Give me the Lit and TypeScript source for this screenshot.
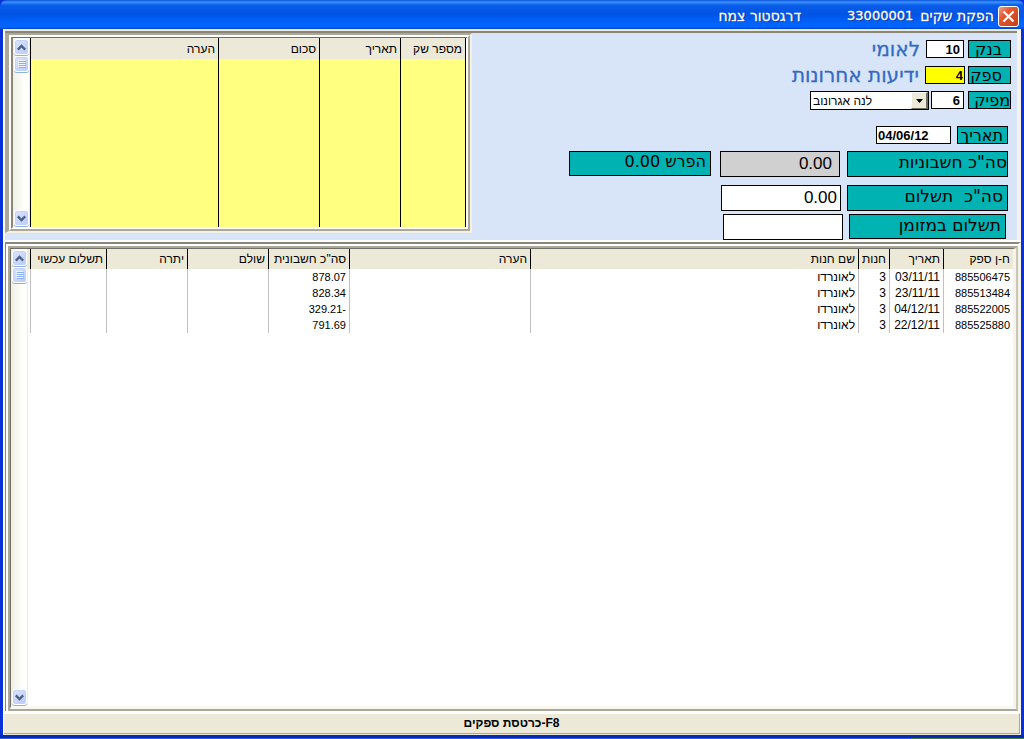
import { LitElement, html, svg, css } from "lit";
import { customElement, property } from "lit/decorators.js";

interface Invoice {
  id: string;
  date: string;
  shop: string;
  name: string;
  total: string;
}

const INVOICES: Invoice[] = [
  { id: "885506475", date: "03/11/11", shop: "3", name: "לאונרדו", total: "878.07" },
  { id: "885513484", date: "23/11/11", shop: "3", name: "לאונרדו", total: "828.34" },
  { id: "885522005", date: "04/12/11", shop: "3", name: "לאונרדו", total: "329.21-" },
  { id: "885525880", date: "22/12/11", shop: "3", name: "לאונרדו", total: "791.69" },
];

/** Vertical Luna-style scroll bar. */
@customElement("scroll-bar")
export class ScrollBar extends LitElement {
  static styles = css`
    :host {
      display: flex;
      flex-direction: column;
      flex: none;
      box-sizing: border-box;
      width: 17px;
      padding: 1px 1px 1px 1px;
      background: linear-gradient(90deg, #f0efe6, #fefefb 70%);
      border-right: 1px solid #eeede5;
    }
    button,
    .thumb {
      box-sizing: border-box;
      width: 15px;
      height: 16px;
      flex: none;
      padding: 0;
      margin: 0;
      border: 1px solid #fff;
      border-radius: 3px;
      background: linear-gradient(135deg, #dbe5fe, #b9cbf8);
      box-shadow: inset 0 0 0 1px #c3d2f8, 0 1px 0 #8faee8;
      display: flex;
      align-items: center;
      justify-content: center;
    }
    .thumb {
      margin-top: 1px;
    }
    .track {
      flex: 1;
    }
  `;

  render() {
    const arrow = (d: string) =>
      svg`<path d=${d} fill="none" stroke="#4d6185" stroke-width="2.4"/>`;
    return html`
      <button aria-label="למעלה" type="button">
        <svg width="9" height="7" viewBox="0 0 9 7">${arrow("M0.8 5.6L4.5 1.9L8.2 5.6")}</svg>
      </button>
      <div class="thumb">
        <svg width="8" height="8" viewBox="0 0 8 8" shape-rendering="crispEdges">
          <path d="M0 0.5H7M0 2.5H7M0 4.5H7M0 6.5H7" stroke="#eef4fe" />
          <path d="M1 1.5H8M1 3.5H8M1 5.5H8M1 7.5H8" stroke="#8cb0f8" />
        </svg>
      </div>
      <div class="track"></div>
      <button aria-label="למטה" type="button">
        <svg width="9" height="7" viewBox="0 0 9 7">${arrow("M0.8 1.4L4.5 5.1L8.2 1.4")}</svg>
      </button>
    `;
  }
}

@customElement("app-root")
export class AppRoot extends LitElement {
  @property({ attribute: false }) invoices: Invoice[] = INVOICES;

  static styles = css`
    :host {
      display: block;
      font-family: "Liberation Sans", Arial, sans-serif;
      font-size: 12px;
      line-height: 16px;
      color: #000;
    }
    * {
      box-sizing: border-box;
    }
    .window {
      display: flex;
      flex-direction: column;
      min-height: 100vh;
      background: #0831d9;
    }
    .title {
      flex: none;
      display: flex;
      direction: rtl;
      align-items: center;
      height: 29px;
      padding: 3px 5px 0;
      border-radius: 7px 7px 0 0;
      background: linear-gradient(#0a4fd8, #3a93ff 7%, #0a5ce8 18%, #0054e3 50%, #0061fb 75%, #0066ff 92%, #0043c8);
      color: #fff;
      font-family: "DejaVu Sans", sans-serif;
      font-size: 14px;
      text-shadow: 1px 1px 0 #0a2f93;
      -webkit-text-stroke: 0.3px #fff;
      white-space: pre;
    }
    .close {
      width: 21px;
      height: 21px;
      flex: none;
      padding: 0;
      border: 1px solid #fff;
      border-radius: 3px;
      background: linear-gradient(135deg, #f0a088, #e05a35 35%, #c83c14);
      display: flex;
      align-items: center;
      justify-content: center;
    }
    .title h1 {
      margin: 0 4px 0 0;
      font: inherit;
      display: flex;
    }
    .num {
      margin: 0 7px 0 46px;
      font-size: 13px;
    }
    .client {
      flex: 1;
      display: flex;
      flex-direction: column;
      margin: 0 3px;
      padding: 0 0 0 1px;
      background: #fff;
      border-bottom: 1px solid #ece9d8;
    }
    .top {
      flex: none;
      display: flex;
      margin-left: 1px;
      border-top: 2px solid #ece9d8;
      background: #d8e4f8;
      border-right: 4px solid #f6f4ea;
      box-shadow: inset 0 2px 0 #8a877a;
      padding: 2px 0 0;
    }
    .checks {
      flex: 0 1 467px;
      align-self: flex-start;
      border: 2px solid #f3f1e4;
      border-top-color: #aca899;
      border-left: 4px solid #aca899;
    }
    .mid {
      border: 2px solid #aca899;
      border-top-color: #fff;
      border-left-color: #fff;
    }
    .inner {
      display: flex;
      height: 192px;
      border: 2px solid #fff;
      border-top: 1px solid #716f64;
      border-left-color: #8a877a;
    }
    table {
      border-collapse: separate;
      border-spacing: 0;
      table-layout: fixed;
      width: 100%;
      direction: rtl;
    }
    th,
    td {
      padding: 0 3px 0 2px;
      font-weight: normal;
      text-align: right;
      white-space: nowrap;
      overflow: hidden;
    }
    th {
      height: 21px;
      background: #ece9d8;
      border-left: 1px solid #000;
      font-size: 12px;
    }
    .yellow {
      flex: 1;
      border-right: 1px solid #000;
      background: #ffff80;
    }
    .yellow td {
      border-left: 1px solid #000;
    }
    .yellow table {
      height: 100%;
    }
    .w65 { width: 65px; }
    .w81 { width: 81px; }
    .w101 { width: 101px; }
    .w70 { width: 70px; }
    .w54 { width: 54px; }
    .w31 { width: 31px; }
    .w181 { width: 181px; }
    .w76 { width: 76px; }

    .form {
      flex: 1;
      direction: rtl;
      padding: 7px 6px 0 0;
    }
    .row {
      display: flex;
      align-items: flex-start;
      height: 18px;
      margin-bottom: 7px;
    }
    .first {
      margin-bottom: 8px;
    }
    .gap {
      margin-bottom: 17px;
    }
    .inset {
      padding-right: 3px;
    }
    .tall {
      height: 26px;
      margin-bottom: 8px;
    }
    .tall.close-up {
      margin-bottom: 3px;
    }
    .tall.last {
      margin-bottom: 0;
      padding-right: 5px;
    }
    .tag {
      flex: none;
      height: 18px;
      border: 1px solid #000;
      background: #00b2b2;
      overflow: hidden;
      white-space: pre;
      font-family: "DejaVu Sans", sans-serif;
      font-size: 16px;
      line-height: 18px;
      padding: 0 4px;
    }
    .t43 {
      width: 43px;
      padding: 0 8px;
    }
    .t51 { width: 51px; }
    .t161,
    .t157 {
      width: 161px;
      height: 26px;
      font-size: 17px;
      line-height: 20px;
    }
    .t157 {
      width: 157px;
      height: 25px;
    }
    .t142 {
      width: 142px;
      height: 25px;
      line-height: 20px;
      margin-right: 9px;
    }
    .tag.snug {
      padding: 0;
    }
    input,
    select {
      flex: none;
      margin: 0;
      border: 1px solid #000;
      border-radius: 0;
      background: #fff;
      color: #000;
      font-family: "Liberation Sans", Arial, sans-serif;
      outline: none;
    }
    input {
      height: 18px;
      padding: 0 3px;
      font-size: 13px;
      font-weight: bold;
      text-align: right;
      direction: ltr;
      margin-right: 4px;
    }
    .n38 { width: 38px; }
    .n33 { width: 33px; }
    .n75 {
      width: 75px;
      text-align: left;
      padding: 0 1px;
      margin-right: 6px;
    }
    .hot {
      width: 40px;
      margin-right: 3px;
      padding: 0 1px;
      background: #ff0;
    }
    .n120 {
      width: 120px;
      height: 26px;
      font-size: 17px;
      font-weight: normal;
      margin-right: 6px;
    }
    .grey {
      background: #d0d0d0;
      padding-right: 7px;
      margin-right: 7px;
    }
    .name {
      margin-right: 6px;
      color: #316ac5;
      font-family: "DejaVu Sans", sans-serif;
      font-size: 20px;
      line-height: 18px;
      -webkit-text-stroke: 0.3px #316ac5;
    }
    .pick {
      position: relative;
      margin-right: 2px;
    }
    select {
      appearance: none;
      display: block;
      width: 119px;
      height: 19px;
      direction: ltr;
      text-align: left;
      padding: 0 20px 0 2px;
      font-size: 12px;
    }
    .drop {
      position: absolute;
      right: 1px;
      top: 1px;
      width: 17px;
      height: 17px;
      background: #ece9d8;
      border: 1px solid #fff;
      border-right: 2px solid #716f64;
      border-bottom-color: #716f64;
      pointer-events: none;
      display: flex;
      align-items: center;
      justify-content: center;
    }

    .bottom {
      flex: 1;
      display: flex;
      border: 1px solid #8a877a;
      border-top: 2px solid #8a877a;
      border-right: 3px solid #f6f4ea;
      border-bottom: 0;
      margin: 2px 0 0 1px;
      padding: 2px 0 0 2px;
    }
    .frame {
      flex: 1;
      display: flex;
      border: 2px solid #aca899;
      border-right-color: #c9c5b4;
    }
    .lip {
      flex: 1;
      display: flex;
      border: 1px solid #716f64;
      border-right: 3px solid #f6f4ea;
      border-bottom: 3px solid #f8f7f0;
    }
    .sheet {
      flex: 1;
      padding-left: 2px;
      background: linear-gradient(#ece9d8, #ece9d8) 0 0 / 100% 20px no-repeat #fff;
    }
    .sheet th {
      height: 20px;
    }
    .sheet td {
      height: 16px;
      font-size: 11px;
      line-height: 16px;
      border-left: 1px solid #c0c0c0;
    }
    .sheet .big {
      font-size: 12px;
    }
    .ltr {
      direction: ltr;
      unicode-bidi: isolate;
    }
    .status {
      flex: none;
      height: 21px;
      margin-top: 2px;
      display: flex;
      justify-content: center;
      direction: rtl;
      background: #ece9d8;
      border: 1px solid #aca899;
      border-top-color: #fff;
      border-left: 0;
      font-weight: bold;
      line-height: 18px;
      margin-right: 1px;
    }
    .edge {
      flex: none;
      height: 4px;
      background: linear-gradient(90deg, #2a62dc 89%, #3a8a3a 89%) 0 100% / 100% 1px no-repeat #0a28b8;
    }
  `;

  render() {
    return html`
      <main class="window">
        <header class="title">
          <button class="close" type="button" aria-label="סגור">
            <svg width="13" height="13" viewBox="0 0 13 13">
              <path d="M1.5 1.5L11.5 11.5M11.5 1.5L1.5 11.5" stroke="#fff" stroke-width="2.2" />
            </svg>
          </button>
          <h1><span>הפקת שקים</span><span class="num">33000001</span><span>דרגסטור צמח</span></h1>
        </header>
        <div class="client">
          <section class="top">
            <div class="checks"><div class="mid"><div class="inner">
              <scroll-bar></scroll-bar>
              <div class="yellow">
                <table>
                  <colgroup><col class="w65" /><col class="w81" /><col class="w101" /><col /></colgroup>
                  <thead><tr><th>מספר שק</th><th>תאריך</th><th>סכום</th><th>הערה</th></tr></thead>
                  <tbody><tr><td></td><td></td><td></td><td></td></tr></tbody>
                </table>
              </div>
            </div></div></div>
            <form class="form">
              <div class="row first">
                <label class="tag t43" for="bank">בנק</label>
                <input id="bank" class="n38" value="10" />
                <span class="name">לאומי</span>
              </div>
              <div class="row">
                <label class="tag t43" for="supplier">ספק</label>
                <input id="supplier" class="hot" value="4" />
                <span class="name">ידיעות אחרונות</span>
              </div>
              <div class="row gap">
                <label class="tag t43 snug" for="issuer">מפיק</label>
                <input id="issuer" class="n33" value="6" />
                <div class="pick">
                  <select aria-label="שם מפיק"><option>לנה אגרונוב</option></select>
                  <span class="drop"><svg width="7" height="4" viewBox="0 0 7 4"><path d="M0 0H7L3.5 4Z" /></svg></span>
                </div>
              </div>
              <div class="row inset">
                <label class="tag t51" for="date">תאריך</label>
                <input id="date" class="n75" value="04/06/12" />
              </div>
              <div class="row tall inset">
                <label class="tag t161 snug" for="invoices">סה"כ חשבוניות</label>
                <input id="invoices" class="n120 grey" value="0.00" />
                <output class="tag t142">הפרש 0.00</output>
              </div>
              <div class="row tall inset close-up">
                <label class="tag t161" for="payment">סה"כ  תשלום</label>
                <input id="payment" class="n120" value="0.00" />
              </div>
              <div class="row tall last">
                <label class="tag t157" for="cash">תשלום במזומן</label>
                <input id="cash" class="n120" value="" />
              </div>
            </form>
          </section>
          <section class="bottom"><div class="frame"><div class="lip">
            <scroll-bar></scroll-bar>
            <div class="sheet">
              <table>
                <colgroup>
                  <col class="w70" /><col class="w54" /><col class="w31" /><col /><col class="w181" />
                  <col class="w81" /><col class="w81" /><col class="w81" /><col class="w76" />
                </colgroup>
                <thead>
                  <tr>
                    <th>ח-ן ספק</th><th>תאריך</th><th>חנות</th><th>שם חנות</th><th>הערה</th>
                    <th>סה"כ חשבונית</th><th>שולם</th><th>יתרה</th><th>תשלום עכשוי</th>
                  </tr>
                </thead>
                <tbody>
                  ${this.invoices.map(
                    (r) => html`<tr>
                      <td>${r.id}</td><td class="big">${r.date}</td><td class="big">${r.shop}</td>
                      <td class="big">${r.name}</td><td></td>
                      <td><span class="ltr">${r.total}</span></td><td></td><td></td><td></td>
                    </tr>`
                  )}
                </tbody>
              </table>
            </div>
          </div></div></section>
          <footer class="status"><span>F8-כרטסת ספקים</span></footer>
        </div>
        <div class="edge"></div>
      </main>
    `;
  }
}
